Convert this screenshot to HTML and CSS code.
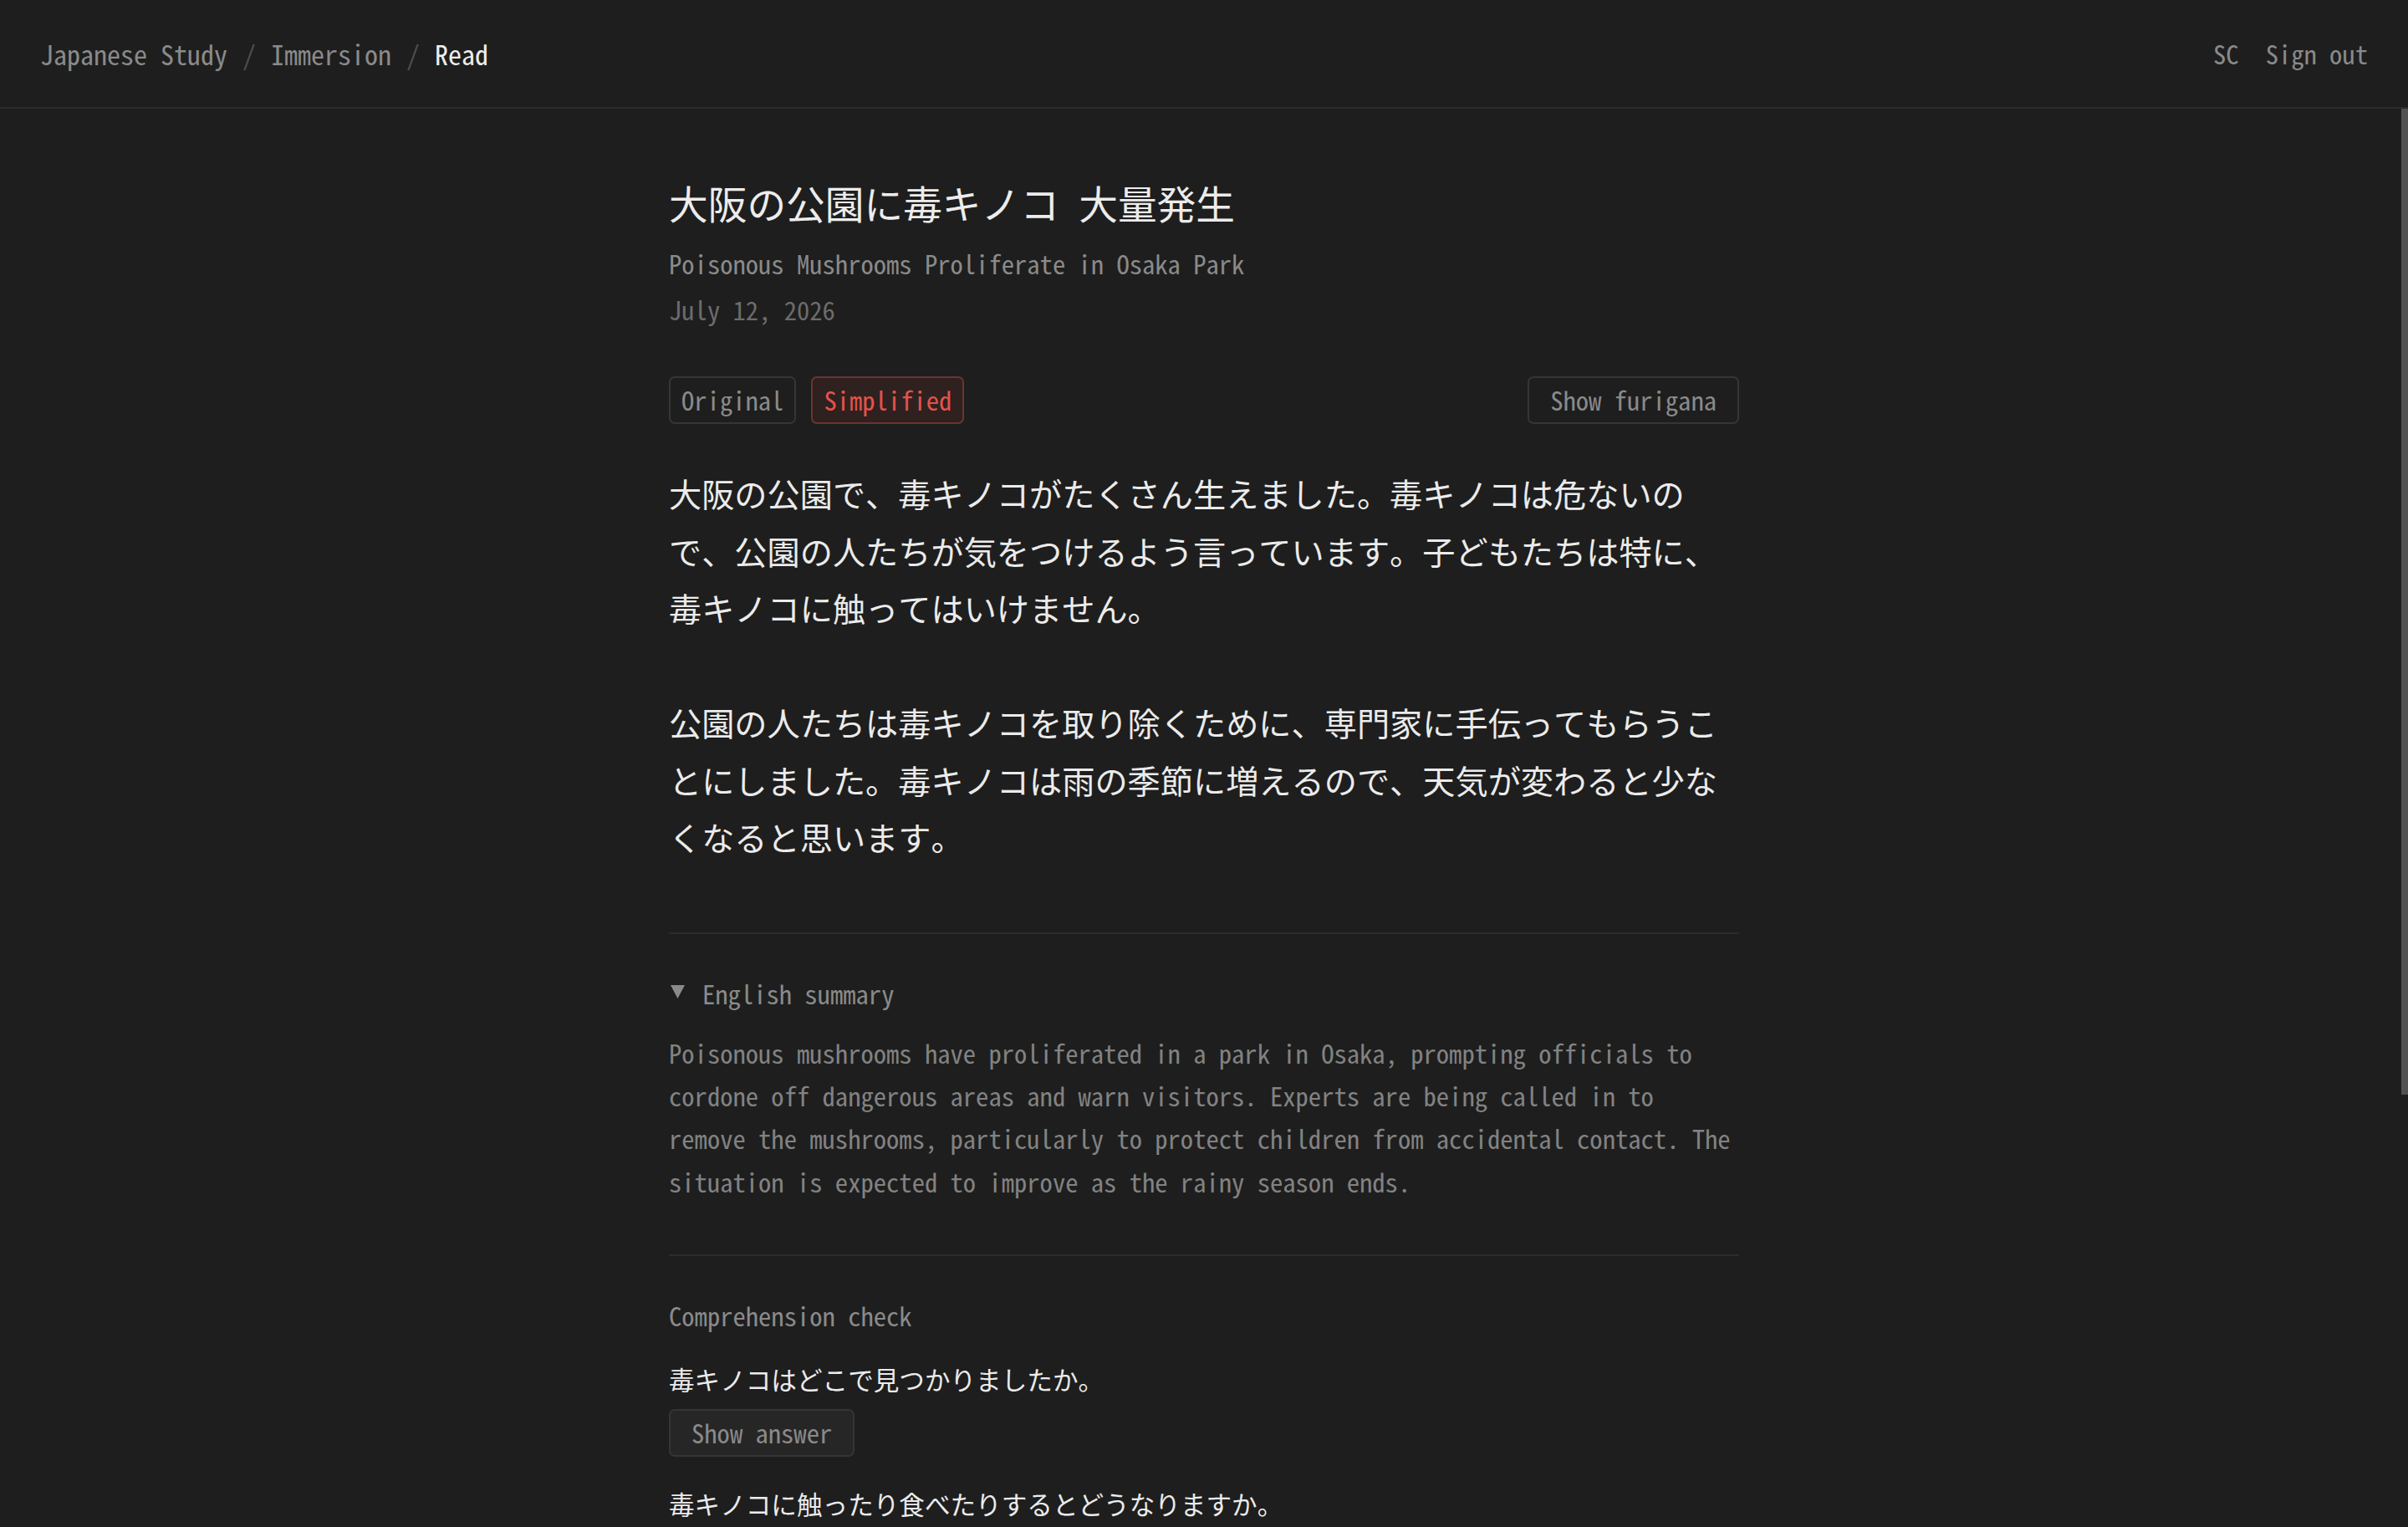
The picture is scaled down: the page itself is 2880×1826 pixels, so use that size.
FILE: index.html
```html
<!DOCTYPE html>
<html lang="ja">
<head>
<meta charset="utf-8">
<title>Read · Immersion · Japanese Study</title>
<link rel="stylesheet" href="styles.css">
</head>
<body>
<div class="app">
  <header class="topbar">
    <nav class="crumbs">
      <a class="crumb" href="#">Japanese Study</a>
      <span class="crumb-sep">/</span>
      <a class="crumb" href="#">Immersion</a>
      <span class="crumb-sep">/</span>
      <span class="crumb crumb-current">Read</span>
    </nav>
    <div class="account">
      <span class="account-initials">SC</span>
      <a class="account-link" href="#">Sign out</a>
    </div>
  </header>

  <main class="scroller">
    <article class="reader">
      <h1 class="title">大阪の公園に毒キノコ 大量発生</h1>
      <p class="subtitle">Poisonous Mushrooms Proliferate in Osaka Park</p>
      <p class="date">July 12, 2026</p>

      <div class="toolbar">
        <div class="version-toggle">
          <button class="seg" type="button">Original</button>
          <button class="seg seg-active" type="button">Simplified</button>
        </div>
        <button class="btn" type="button">Show furigana</button>
      </div>

      <div class="story">
        <p>大阪の公園で、毒キノコがたくさん生えました。毒キノコは危ないので、公園の人たちが気をつけるよう言っています。子どもたちは特に、毒キノコに触ってはいけません。</p>
        <p>公園の人たちは毒キノコを取り除くために、専門家に手伝ってもらうことにしました。毒キノコは雨の季節に増えるので、天気が変わると少なくなると思います。</p>
      </div>

      <hr class="rule">

      <details class="summary" open>
        <summary class="summary-toggle">
          <svg class="summary-caret" width="17" height="16" viewBox="0 0 17 16" aria-hidden="true"><polygon points="0,0 17,0 8.5,16" fill="#8a8a8a"/></svg>
          <span>English summary</span>
        </summary>
        <p class="summary-text">Poisonous mushrooms have proliferated in a park in Osaka, prompting officials to cordone off dangerous areas and warn visitors. Experts are being called in to remove the mushrooms, particularly to protect children from accidental contact. The situation is expected to improve as the rainy season ends.</p>
      </details>

      <hr class="rule rule-quiz">

      <section class="quiz">
        <h2 class="quiz-label">Comprehension check</h2>
        <div class="question">
          <p class="question-text">毒キノコはどこで見つかりましたか。</p>
          <button class="btn btn-fill" type="button">Show answer</button>
        </div>
        <div class="question">
          <p class="question-text">毒キノコに触ったり食べたりするとどうなりますか。</p>
          <button class="btn btn-fill" type="button">Show answer</button>
        </div>
      </section>
    </article>
  </main>

  <div class="scroll-thumb" aria-hidden="true"></div>
</div>
</body>
</html>
```

FILE: styles.css
```css
* {
  box-sizing: border-box;
}

html,
body {
  margin: 0;
  height: 100%;
}

body {
  background: #1e1e1e;
  color: #e8e8e8;
  font-family: "Noto Sans Mono CJK JP", "Noto Sans CJK JP", monospace;
  font-size: 30.6px;
}

a {
  color: inherit;
  text-decoration: none;
}

button {
  font: inherit;
  cursor: pointer;
}

.app {
  position: relative;
  height: 100vh;
  display: flex;
  flex-direction: column;
}

/* top bar */
.topbar {
  flex: none;
  height: 130px;
  padding: 0 48px;
  display: flex;
  align-items: center;
  justify-content: space-between;
  border-bottom: 2px solid #2c2c2c;
}

.crumbs {
  display: flex;
  align-items: center;
  gap: 18px;
  font-size: 32px;
  color: #8a8a8a;
}

.crumb-sep {
  color: #4f4f4f;
}

.crumb-current {
  color: #ededed;
}

.account {
  display: flex;
  align-items: center;
  gap: 32px;
  color: #8a8a8a;
}

/* scrolling reading pane */
.scroller {
  flex: 1;
  overflow-y: auto;
}

.scroller::-webkit-scrollbar {
  width: 8px;
}

.scroller::-webkit-scrollbar-track {
  background: transparent;
}

.scroller::-webkit-scrollbar-thumb {
  background: #525252;
}

.scroll-thumb {
  position: absolute;
  top: 130px;
  right: 0;
  width: 8px;
  height: 1179px;
  background: #525252;
  pointer-events: none;
}

.reader {
  width: 1280px;
  margin: 0 auto;
  padding: 82px 0 678px;
}

.title {
  margin: 0;
  font-size: 46.7px;
  font-weight: 400;
  line-height: 60px;
  color: #ececec;
}

.subtitle {
  margin: 16px 0 0;
  line-height: 55px;
  color: #8a8a8a;
}

.date {
  margin: 0;
  line-height: 55px;
  color: #6c6c6c;
}

/* version toggle + furigana */
.toolbar {
  margin-top: 52px;
  display: flex;
  justify-content: space-between;
  align-items: center;
}

.version-toggle {
  display: flex;
  gap: 18px;
}

.seg,
.btn {
  height: 57px;
  border: 2px solid #353535;
  border-radius: 7px;
  background: transparent;
  color: #8a8a8a;
  line-height: 1;
}

.seg {
  padding: 0 13px;
}

.seg-active {
  background: #2e2120;
  border-color: #6a3531;
  color: #e2534a;
}

.btn {
  padding: 0 25px;
}

.btn-fill {
  background: #262626;
}

/* story text */
.story {
  margin-top: 48px;
  font-size: 39.2px;
  line-height: 68.5px;
  color: #ebebeb;
}

.story p {
  margin: 0 0 68.5px;
}

.story p:last-child {
  margin-bottom: 0;
}

.rule {
  margin: 80px 0 0;
  border: 0;
  border-top: 2px solid #2c2c2c;
}

.rule-quiz {
  margin-top: 61px;
}

/* english summary */
.summary {
  margin-top: 48px;
}

.summary-toggle {
  display: flex;
  align-items: center;
  gap: 21px;
  height: 46px;
  list-style: none;
  color: #8a8a8a;
  cursor: pointer;
}

.summary-toggle::-webkit-details-marker {
  display: none;
}

.summary-caret {
  flex: none;
  margin-left: 2px;
  margin-top: -4px;
}

.summary-text {
  margin: 23px 0 0;
  line-height: 51.4px;
  color: #828282;
}

/* comprehension questions */
.quiz {
  margin-top: 48px;
}

.quiz-label {
  margin: 0;
  font-size: inherit;
  font-weight: 400;
  line-height: 46px;
  color: #8a8a8a;
}

.question {
  margin-top: 31px;
}

.question + .question {
  margin-top: 34px;
}

.question-text {
  margin: 0 0 14px;
  line-height: 44px;
  color: #ebebeb;
}
```
